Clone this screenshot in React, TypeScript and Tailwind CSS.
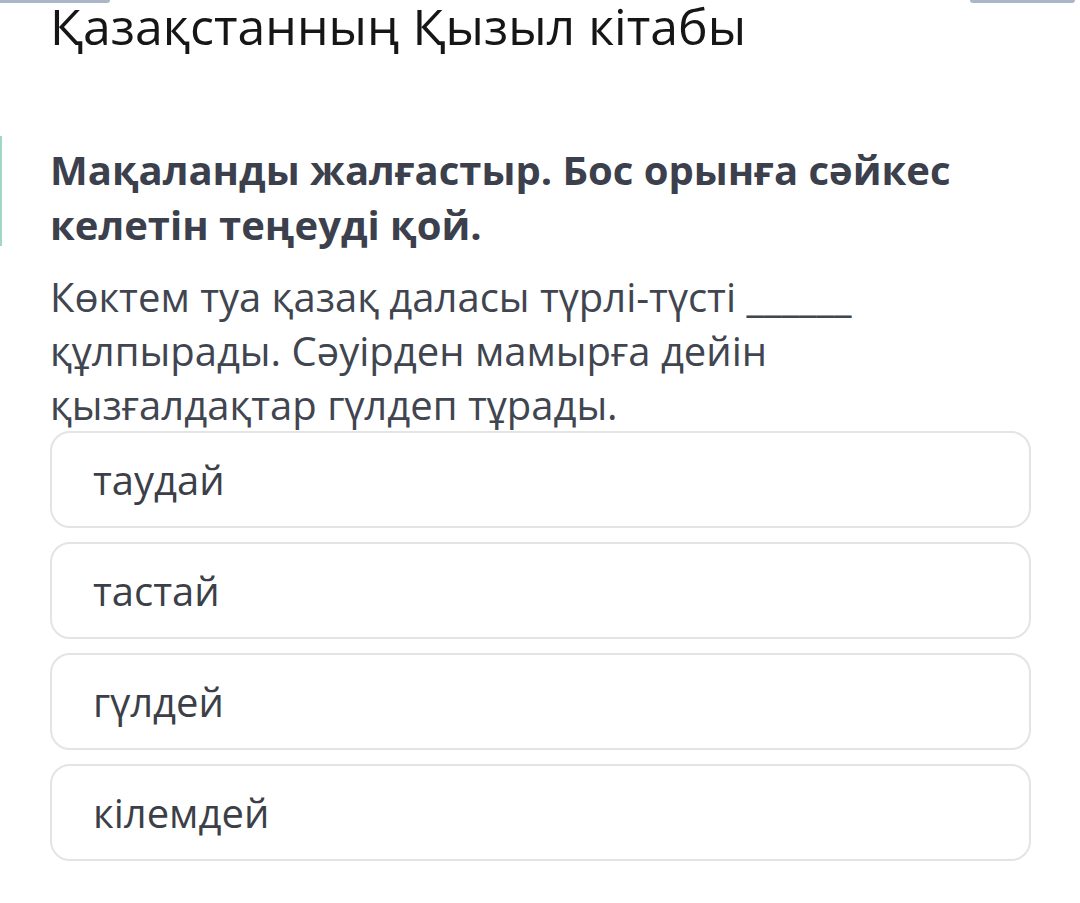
const options = ["таудай", "тастай", "гүлдей", "кілемдей"];

export default function App() {
  return (
    <div className="w-[1080px] h-[903px] bg-white overflow-hidden" style={{ fontFamily: '"Open Sans", "Noto Sans", sans-serif' }}>
      <div className="flex justify-between h-[3px] pr-[5px]">
        <div className="w-[110px] h-[3px] rounded-br-[3px] bg-[#a9b7c6]" />
        <div className="w-[105px] h-[3px] rounded-b-[3px] bg-[#a9b7c6]" />
      </div>

      <h1 className="pl-[50px] text-[50px] leading-[46px] text-[#161616] font-normal">Қазақстанның Қызыл кітабы</h1>

      <div className="mt-[87px] h-[110px] border-l-2 border-[#a3d6c3]">
        <h2 className="pt-[6px] pl-[48px] pr-[49px] text-[40px] leading-[55px] font-bold text-[#3b404c]">
          Мақаланды жалғастыр. Бос орынға сәйкес келетін теңеуді қой.
        </h2>
      </div>

      <div className="pl-[50px] pr-[49px]">
        <p className="mt-[24px] pr-[100px] text-[40px] leading-[54px] text-[#40454f]">
          Көктем туа қазақ даласы түрлі-түсті ______ құлпырады. Сәуірден мамырға дейін қызғалдақтар гүлдеп тұрады.
        </p>

        <div className="mt-[-1px] flex flex-col gap-[14px]">
          {options.map((o) => (
            <div key={o} className="h-[97px] flex items-center px-[41px] border-2 border-[#e4e4e4] rounded-[20px] text-[40px] text-[#3c3f48]">
              {o}
            </div>
          ))}
        </div>
      </div>
    </div>
  );
}
